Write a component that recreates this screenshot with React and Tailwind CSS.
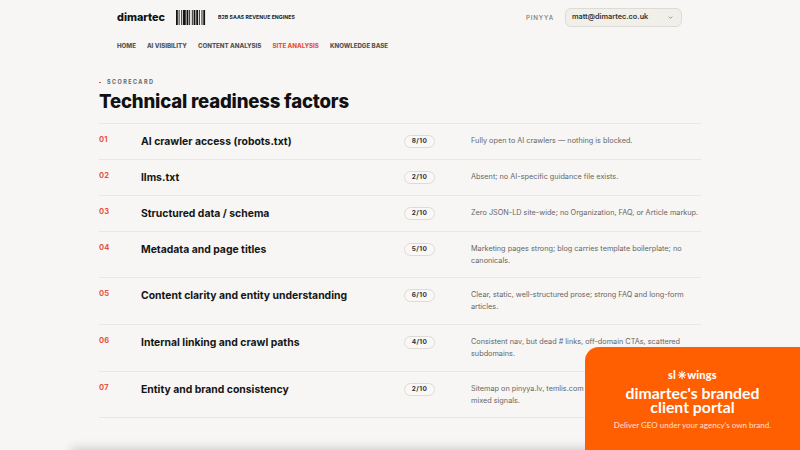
const rows = [
  ["01", "AI crawler access (robots.txt)", "8/10", "Fully open to AI crawlers — nothing is blocked.", "h-9"],
  ["02", "llms.txt", "2/10", "Absent; no AI-specific guidance file exists.", "h-9"],
  ["03", "Structured data / schema", "2/10", "Zero JSON-LD site-wide; no Organization, FAQ, or Article markup.", "h-9"],
  ["04", "Metadata and page titles", "5/10", "Marketing pages strong; blog carries template boilerplate; no canonicals.", "h-[46px]"],
  ["05", "Content clarity and entity understanding", "6/10", "Clear, static, well-structured prose; strong FAQ and long-form articles.", "h-[47px]"],
  ["06", "Internal linking and crawl paths", "4/10", "Consistent nav, but dead # links, off-domain CTAs, scattered subdomains.", "h-[47px]"],
  ["07", "Entity and brand consistency", "2/10", "Sitemap on pinyya.lv, temlis.com\nmixed signals.", "h-[46px]"],
];

const bars = [2,1,1,2,1,1,3,1,2,1,1,2,1,1,2,1,2,1,1,2,1,1,2];

function Barcode() {
  let x = 0;
  return (
    <svg width="32" height="15" viewBox="0 0 32 15" className="block">
      {bars.map((w, i) => {
        const r = i % 2 === 0 ? <rect key={i} x={x} y="0" width={w * 0.9} height="15" fill="#111" /> : null;
        x += w * 0.88;
        return r;
      })}
    </svg>
  );
}

function Row({ n, title, score, desc, h }) {
  return (
    <div className={`${h} grid grid-cols-[42px_263px_67px_1fr] border-t border-[#e8e7e3] pt-[11px]`}>
      <div className="text-[7.5px] leading-[10px] font-bold tracking-[0.04em] text-[#e5533d]">{n}</div>
      <div className="text-[10.4px] leading-[14px] font-bold text-[#161616]">{title}</div>
      <div>
        <span className="flex h-[13px] w-[31px] items-center justify-center rounded-full border border-[#dcdbd6] bg-[#f9f8f6] text-[6.5px] font-bold tracking-[0.06em] text-[#333]">{score}</span>
      </div>
      <div className="whitespace-pre-line text-[7.3px] leading-[12px] text-[#666]">{desc}</div>
    </div>
  );
}

export default function App() {
  return (
    <div className="relative h-[450px] w-[800px] overflow-hidden bg-[#f7f6f4] font-['Inter',sans-serif] antialiased">
      <header className="ml-[117px] mr-[118px] flex h-[35px] items-center">
        <span className="w-[49px] pt-[1px] text-[10.8px] font-extrabold text-[#111]">dimartec</span>
        <span className="ml-[10px]"><Barcode /></span>
        <span className="ml-[10px] pt-[1px] text-[5.2px] font-bold tracking-[0.01em] text-[#222]">B2B SAAS REVENUE ENGINES</span>
        <span className="ml-auto pt-[1px] text-[6.2px] font-medium tracking-[0.14em] text-[#777]">PINYYA</span>
        <div className="ml-[11px] flex h-[19px] w-[117px] items-center justify-between rounded-[6px] border border-[#dddbd3] bg-[#f0efe9] pl-[6px] pr-[7px]">
          <span className="text-[7.3px] font-semibold text-[#333]">matt@dimartec.co.uk</span>
          <svg width="7" height="7" viewBox="0 0 24 24" fill="none" stroke="#777" strokeWidth="2.5"><path d="M6 9l6 6 6-6" /></svg>
        </div>
      </header>
      <nav className="ml-[117px] mt-[6px] flex h-[10px] items-center gap-[11px] text-[6.15px] font-extrabold text-[#555]">
        <span>HOME</span>
        <span>AI VISIBILITY</span>
        <span>CONTENT ANALYSIS</span>
        <span className="text-[#e5533d]">SITE ANALYSIS</span>
        <span>KNOWLEDGE BASE</span>
      </nav>
      <main className="mx-[99px] mt-[26px]">
        <div className="flex h-[10px] items-center text-[5.5px] font-bold tracking-[0.26em] text-[#666]">
          <span className="mr-[6px] h-[1px] w-[2px] bg-[#e5533d]" />
          SCORECARD
        </div>
        <h1 className="mt-[2px] h-[34px] text-[18.6px] leading-[24px] font-extrabold tracking-[-0.01em] text-[#111]">Technical readiness factors</h1>
        <div className="border-b border-[#e8e7e3]">
          {rows.map((r) => (
            <Row key={r[0]} n={r[0]} title={r[1]} score={r[2]} desc={r[3]} h={r[4]} />
          ))}
        </div>
      </main>
      <div className="absolute left-[75px] right-0 top-[451px] h-[10px] shadow-[0_0_10px_4px_rgba(0,0,0,0.14)]" />
      <aside className="absolute bottom-0 right-0 flex h-[103px] w-[215px] flex-col items-center rounded-tl-[14px] bg-[#ff5f00] pt-[22px] text-white font-['Lato',sans-serif]">
        <div className="flex h-[11px] items-center text-[11px] font-black leading-none tracking-[0.02em]">
          sl
          <svg width="10" height="10" viewBox="0 0 24 24" stroke="white" strokeWidth="2.5" className="mx-[0.5px]"><path d="M12 2v20M2 12h20M5 5l14 14M19 5L5 19" /></svg>
          wings
        </div>
        <div className="mt-[6px] text-center text-[15.8px] font-bold leading-[14px]">dimartec's branded<br />client portal</div>
        <div className="mt-[6px] text-[8px] leading-[10px] font-medium text-[#ffdcc8]">Deliver GEO under your agency's own brand.</div>
      </aside>
    </div>
  );
}
